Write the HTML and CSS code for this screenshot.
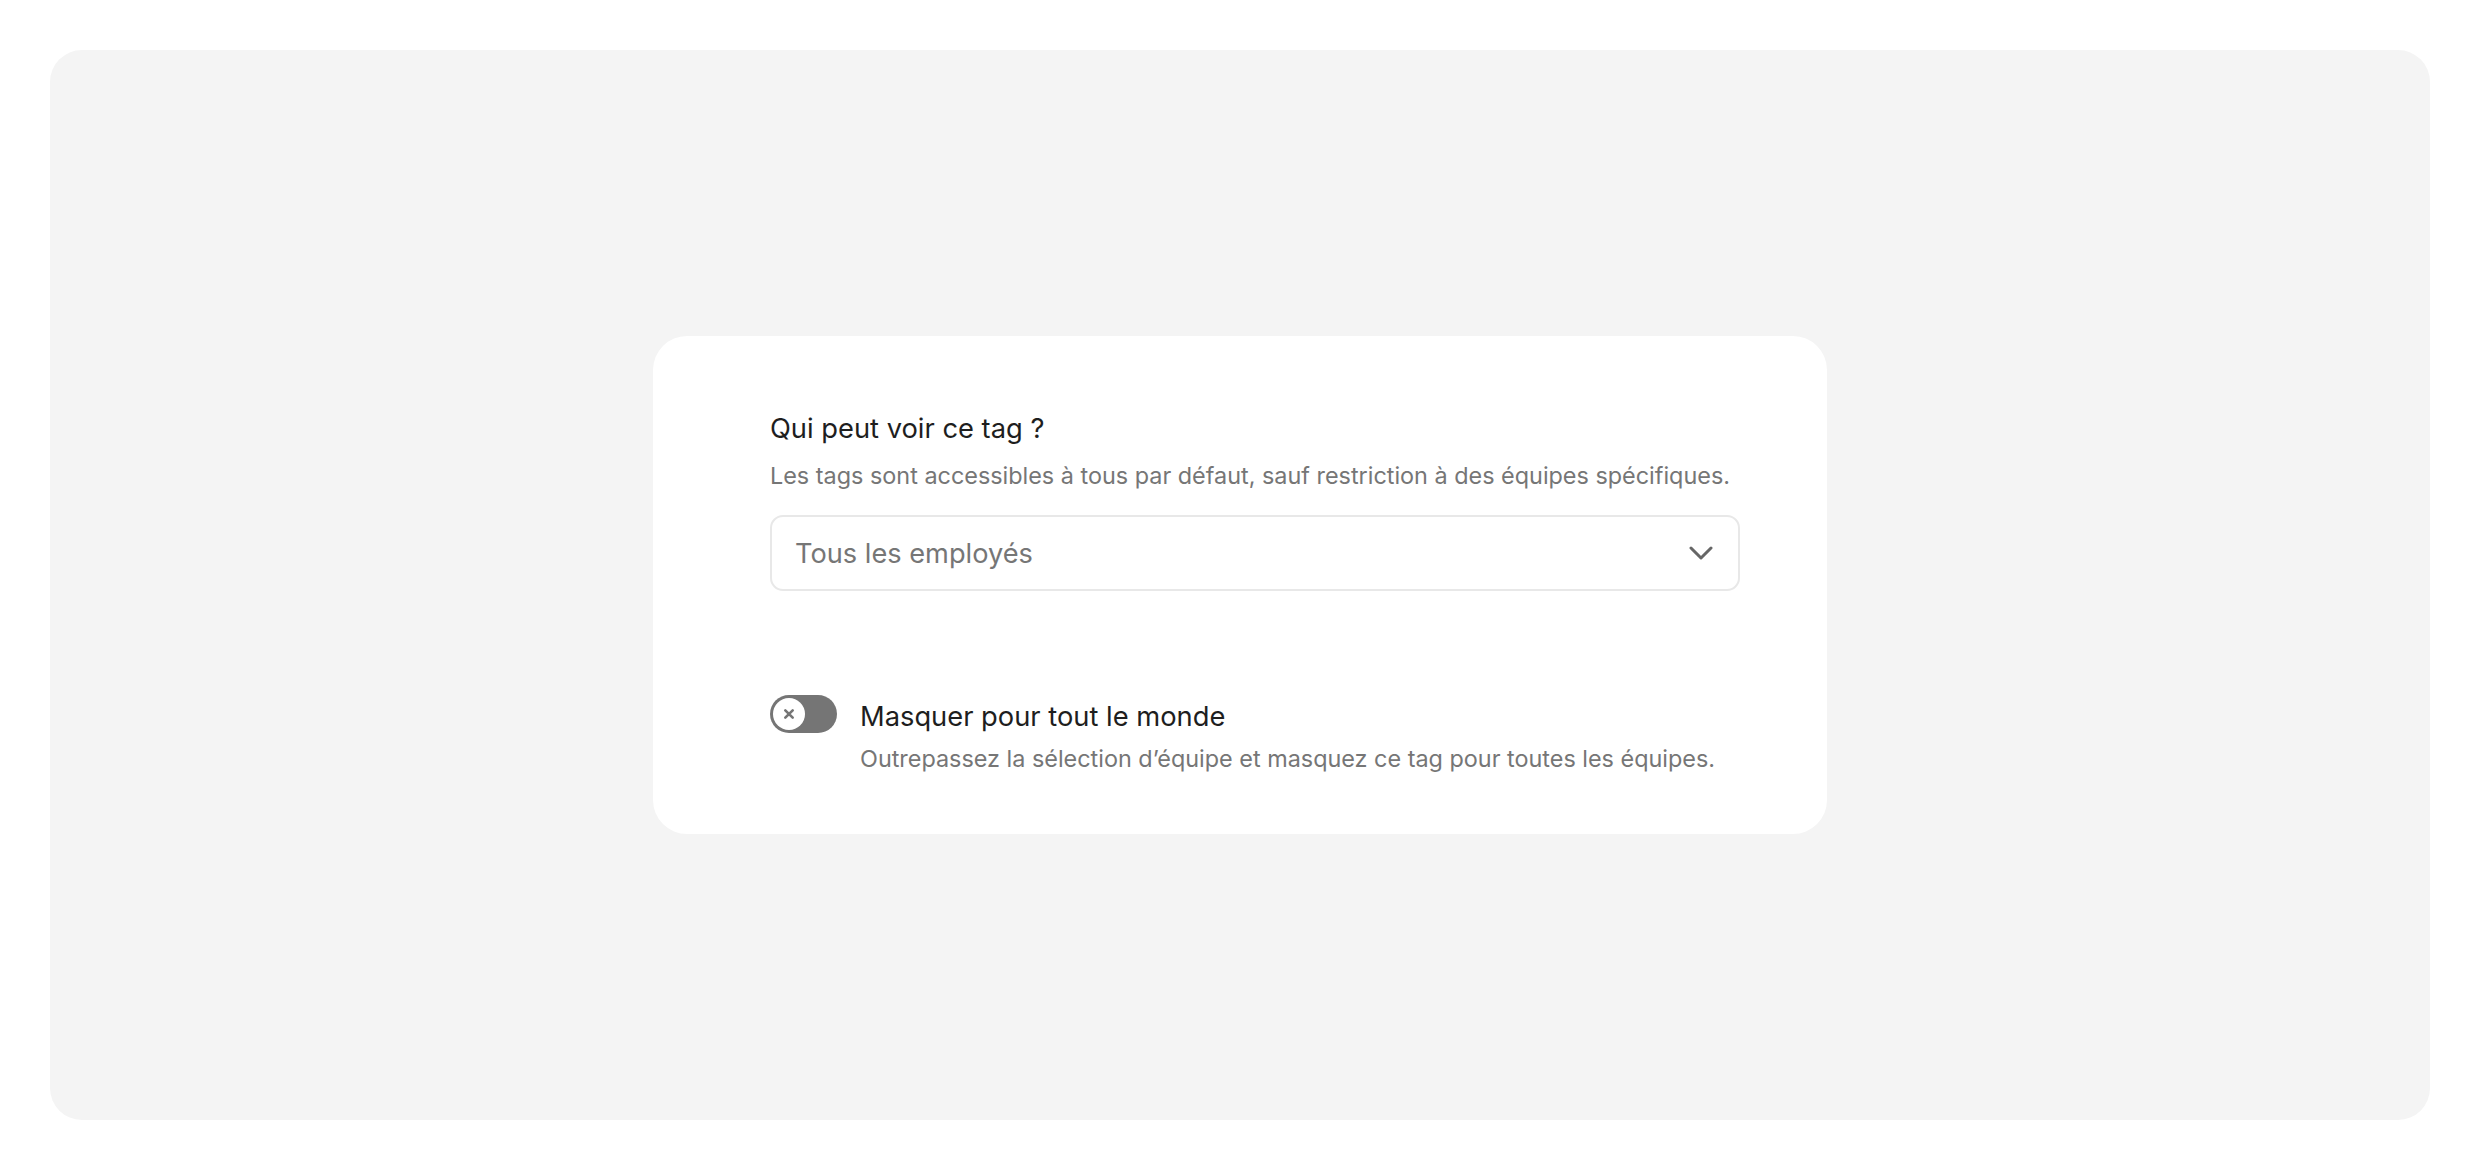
FILE: index.html
```html
<!DOCTYPE html>
<html lang="fr">
<head>
<meta charset="utf-8">
<title>Visibilité du tag</title>
<link rel="stylesheet" href="styles.css">
</head>
<body>
<div class="canvas">
  <section class="card">
    <div class="field">
      <h2 class="field-title">Qui peut voir ce tag ?</h2>
      <p class="field-desc">Les tags sont accessibles à tous par défaut, sauf restriction à des équipes spécifiques.</p>
      <div class="select">
        <span class="select-value">Tous les employés</span>
        <svg class="chevron" width="24" height="14" viewBox="0 0 24 14" aria-hidden="true">
          <path d="M2 2 L12 12 L22 2" fill="none" stroke="#666" stroke-width="3" stroke-linecap="round" stroke-linejoin="round"/>
        </svg>
      </div>
    </div>
    <div class="toggle-row">
      <div class="toggle">
        <div class="knob">
          <svg width="12" height="12" viewBox="0 0 12 12" aria-hidden="true">
            <path d="M2.3 2.3 L9.7 9.7 M9.7 2.3 L2.3 9.7" stroke="#757575" stroke-width="2.6" stroke-linecap="round"/>
          </svg>
        </div>
      </div>
      <div class="toggle-text">
        <div class="toggle-title">Masquer pour tout le monde</div>
        <div class="toggle-desc">Outrepassez la sélection d’équipe et masquez ce tag pour toutes les équipes.</div>
      </div>
    </div>
  </section>
</div>
</body>
</html>
```
FILE: styles.css
```css
* { box-sizing: border-box; }
html, body { margin: 0; padding: 0; background: #ffffff; }
body {
  font-family: Inter, "Noto Sans", "Liberation Sans", sans-serif;
  padding: 50px;
}
.canvas {
  height: 1070px;
  background: #f4f4f4;
  border-radius: 32px;
  display: flex;
  align-items: center;
  justify-content: center;
}
.card {
  width: 1174px;
  background: #ffffff;
  border-radius: 34px;
  padding: 75px 87px 60px 117px;
}
.field-title {
  margin: 0;
  font-size: 27.3px;
  line-height: 36px;
  font-weight: 400;
  color: #1e1e1e;
}
.field-desc {
  margin: 14px 0 0;
  font-size: 23.4px;
  line-height: 30px;
  color: #767676;
}
.select {
  margin-top: 24px;
  height: 76px;
  border: 2px solid #e8e8e8;
  border-radius: 13px;
  display: flex;
  align-items: center;
  justify-content: space-between;
  padding: 0 25px 0 23px;
}
.select-value {
  font-size: 27.2px;
  color: #767676;
}
.chevron { display: block; }
.toggle-row {
  margin-top: 104px;
  display: flex;
  align-items: flex-start;
  gap: 23px;
}
.toggle {
  flex: none;
  width: 67px;
  height: 38px;
  border-radius: 19px;
  background: #757575;
  padding: 3px;
  display: flex;
  align-items: center;
}
.knob {
  width: 32px;
  height: 32px;
  border-radius: 50%;
  background: #ffffff;
  display: flex;
  align-items: center;
  justify-content: center;
}
.knob svg { display: block; }
.toggle-text { padding-top: 4.5px; }
.toggle-title {
  font-size: 27.3px;
  line-height: 34px;
  color: #1e1e1e;
}
.toggle-desc {
  margin-top: 10px;
  font-size: 23.4px;
  line-height: 30px;
  color: #767676;
}
```
